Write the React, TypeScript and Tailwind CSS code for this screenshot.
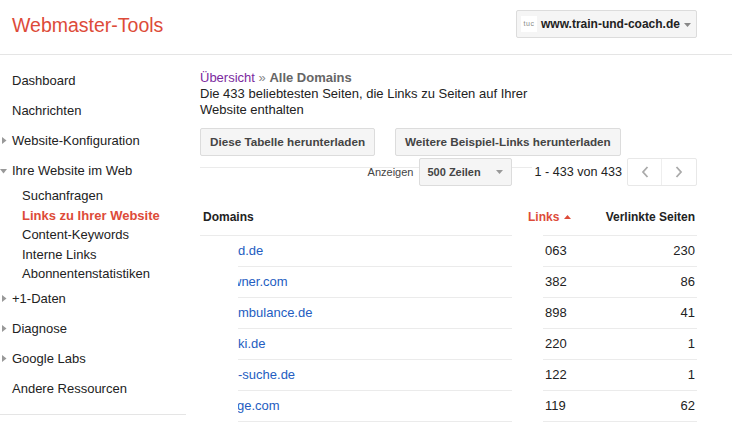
import React from "react";

const font = { fontFamily: '"Liberation Sans", Arial, sans-serif' };

function Tri({ open = false }: { open?: boolean }) {
  return (
    <span className="w-[12px] flex items-center">
      {open ? (
        <svg width="8" height="5" viewBox="0 0 8 5">
          <path d="M0 0h7L3.5 4.5z" fill="#999" />
        </svg>
      ) : (
        <svg width="5" height="8" viewBox="0 0 5 8" className="ml-[2px]">
          <path d="M0 0v7l4.5-3.5z" fill="#999" />
        </svg>
      )}
    </span>
  );
}

function NavItem({ label, arrow, open }: { label: string; arrow?: boolean; open?: boolean }) {
  return (
    <div className="h-[30px] flex items-center">
      {arrow ? <Tri open={open} /> : <span className="w-[12px]" />}
      <span>{label}</span>
    </div>
  );
}

const rows = [
  { d: "d.de", off: 0, l: "063", v: "230" },
  { d: "wner.com", off: -6, l: "382", v: "86" },
  { d: "mbulance.de", off: 0, l: "898", v: "41" },
  { d: "ki.de", off: 0, l: "220", v: "1" },
  { d: "-suche.de", off: 0, l: "122", v: "1" },
  { d: "ge.com", off: -1, l: "119", v: "62" },
];

export default function App() {
  return (
    <div className="w-[732px] h-[422px] overflow-hidden bg-white text-[13px] text-[#222]" style={font}>
      {/* Header */}
      <div className="h-[55px] border-b border-[#e5e5e5] flex items-start justify-between">
        <div className="pl-[12px] pt-[13px] text-[19.5px] leading-[24px] text-[#dd4b39]">Webmaster-Tools</div>
        <div className="mt-[10px] mr-[35px] h-[28px] w-[181px] border border-[#dcdcdc] bg-[#f5f5f5] rounded-[2px] flex items-center">
          <span className="ml-[4px] w-[16px] h-[16px] bg-white flex items-center justify-center text-[7px] text-[#888] tracking-[0.5px]">tuc</span>
          <span className="ml-[4px] text-[12px] font-bold text-[#222]">www.train-und-coach.de</span>
          <svg width="7" height="4" viewBox="0 0 7 4" className="ml-[4px] mt-[2px]">
            <path d="M0 0h7L3.5 4z" fill="#888" />
          </svg>
        </div>
      </div>

      <div className="flex">
        {/* Sidebar */}
        <div className="w-[186px] shrink-0 pt-[11px]">
          <NavItem label="Dashboard" />
          <NavItem label="Nachrichten" />
          <NavItem label="Website-Konfiguration" arrow />
          <NavItem label="Ihre Website im Web" arrow open />
          <div className="pl-[22px] leading-[19.5px]">
            <div>Suchanfragen</div>
            <div className="font-bold text-[#dd4b39]">Links zu Ihrer Website</div>
            <div>Content-Keywords</div>
            <div>Interne Links</div>
            <div>Abonnentenstatistiken</div>
          </div>
          <NavItem label="+1-Daten" arrow />
          <NavItem label="Diagnose" arrow />
          <NavItem label="Google Labs" arrow />
          <NavItem label="Andere Ressourcen" />
          <div className="mt-[10px] h-px bg-[#e5e5e5]" />
        </div>

        {/* Main */}
        <div className="ml-[14px] w-[497px] pt-[15px]">
          <div className="leading-[16px]">
            <span className="text-[#7b2a9e]">Übersicht</span>
            <span className="text-[#888]"> » </span>
            <span className="font-bold text-[#666]">Alle Domains</span>
          </div>
          <div className="leading-[16px] max-w-[340px]">
            Die 433 beliebtesten Seiten, die Links zu Seiten auf Ihrer Website enthalten
          </div>

          <div className="mt-[10px] flex gap-[20px]">
            <button className="h-[28px] px-[9px] border border-[#dcdcdc] bg-[#f5f5f5] rounded-[2px] text-[11.7px] font-bold text-[#444]">
              Diese Tabelle herunterladen
            </button>
            <button className="h-[28px] px-[9px] border border-[#dcdcdc] bg-[#f5f5f5] rounded-[2px] text-[11.7px] font-bold text-[#444]">
              Weitere Beispiel-Links herunterladen
            </button>
          </div>
          <div className="mt-[11px] w-[332px] h-px bg-[#ebebeb]" />

          {/* Pager row */}
          <div className="-mt-[10px] h-[28px] flex items-center justify-end">
            <span className="text-[11px] text-[#444]">Anzeigen</span>
            <div className="ml-[6px] h-[28px] w-[93px] border border-[#dcdcdc] bg-[#f5f5f5] rounded-[2px] flex items-center">
              <span className="ml-[7px] text-[11px] font-bold text-[#444]">500 Zeilen</span>
              <svg width="7" height="4" viewBox="0 0 7 4" className="ml-auto mr-[8px]">
                <path d="M0 0h7L3.5 4z" fill="#999" />
              </svg>
            </div>
            <span className="ml-[22px] mr-[5px] text-[12.6px]">1 - 433 von 433</span>
            <div className="flex h-[28px] border border-[#e8e8e8] rounded-[2px] bg-white">
              <div className="w-[34px] flex items-center justify-center border-r border-[#eeeeee]">
                <svg width="8" height="12" viewBox="0 0 8 12">
                  <path d="M6.5 1L2 6l4.5 5" stroke="#aaa" strokeWidth="1.8" fill="none" />
                </svg>
              </div>
              <div className="w-[34px] flex items-center justify-center">
                <svg width="8" height="12" viewBox="0 0 8 12">
                  <path d="M1.5 1L6 6l-4.5 5" stroke="#aaa" strokeWidth="1.8" fill="none" />
                </svg>
              </div>
            </div>
          </div>

          {/* Table */}
          <div className="mt-[22px] flex h-[28px] items-end text-[12px] font-bold">
            <div className="w-[312px] h-full border-b border-[#ebebeb] pl-[3px] pb-[9px] flex items-end">Domains</div>
            <div className="w-[31px]" />
            <div className="flex-1 h-full border-b border-[#ebebeb] pb-[9px] flex items-end">
              <span className="-ml-[15px] text-[#dd4b39] flex items-center">
                Links
                <svg width="7" height="4" viewBox="0 0 7 4" className="ml-[5px]">
                  <path d="M0 4h7L3.5 0z" fill="#dd4b39" />
                </svg>
              </span>
              <span className="ml-auto pr-[2px]">Verlinkte Seiten</span>
            </div>
          </div>
          {rows.map((r) => (
            <div key={r.l} className="flex h-[31px]">
              <div className="w-[312px] pl-[38px]">
                <div className="h-full border-b border-[#ebebeb] flex items-center overflow-hidden">
                  <span className="text-[#245dc1] whitespace-nowrap" style={{ marginLeft: r.off }}>
                    {r.d}
                  </span>
                </div>
              </div>
              <div className="w-[31px]" />
              <div className="flex-1 border-b border-[#ebebeb] flex items-center justify-between pl-[2px] pr-[2px]">
                <span>{r.l}</span>
                <span>{r.v}</span>
              </div>
            </div>
          ))}
        </div>
      </div>
    </div>
  );
}
